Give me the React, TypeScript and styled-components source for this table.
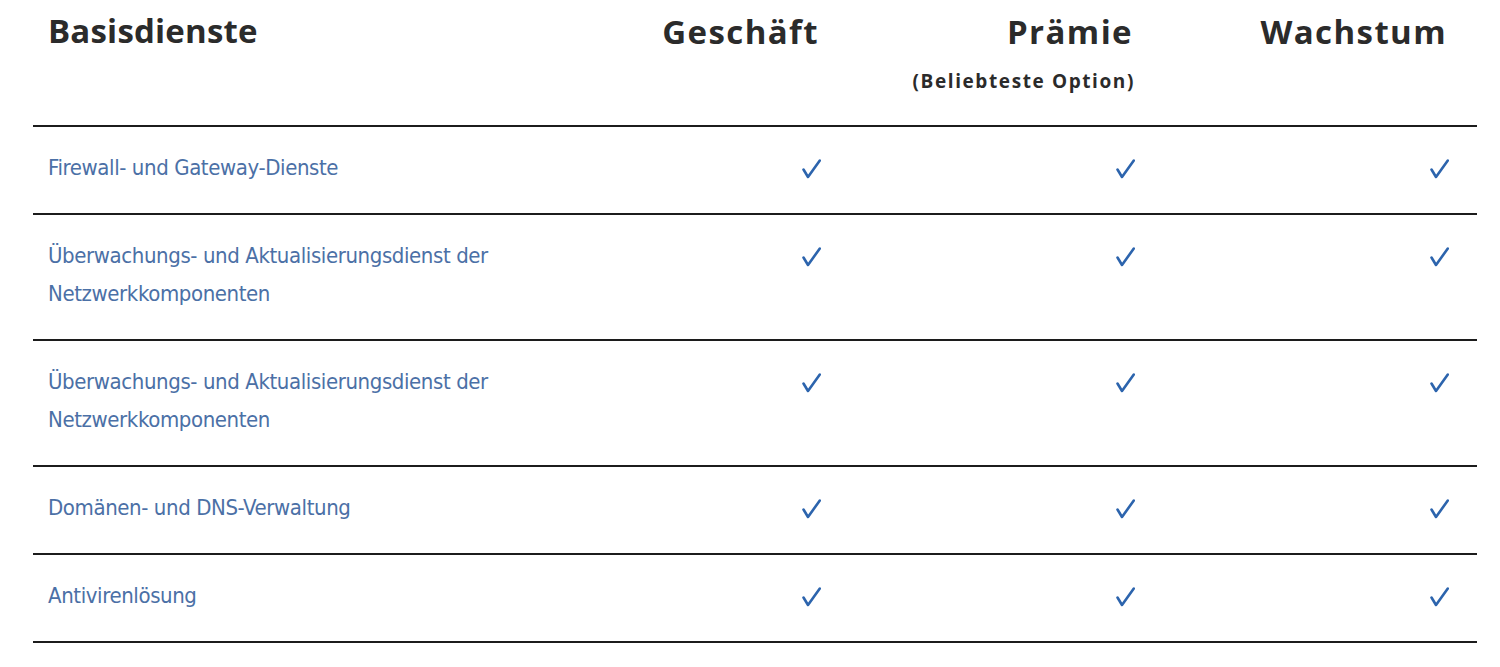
import React from "react";
import styled, { createGlobalStyle } from "styled-components";

const Global = createGlobalStyle`
  html, body { margin: 0; padding: 0; background: #fff; }
`;

const Page = styled.div`
  padding: 0 23px 0 33px;
`;

const Table = styled.table`
  width: 1444px;
  border-collapse: collapse;
  table-layout: fixed;
`;

const HeadCell = styled.th<{ $first?: boolean }>`
  text-align: ${(p) => (p.$first ? "left" : "right")};
  vertical-align: top;
  padding: ${(p) => (p.$first ? "9px 0 0 15px" : "10px 30px 0 0")};
  height: 126px;
  box-sizing: border-box;
  border-bottom: 2px solid #1c1c1c;
  font-family: "Open Sans", sans-serif;
  color: #2b2b2b;
`;

const HeadTitle = styled.div<{ $spaced?: boolean }>`
  font-size: 33px;
  font-weight: 700;
  line-height: 44px;
  letter-spacing: ${(p) => (p.$spaced ? "1.4px" : "0.2px")};
`;

const HeadNote = styled.div`
  font-size: 19px;
  font-weight: 700;
  letter-spacing: 1.6px;
  margin-top: 15px;
  line-height: 24px;
  margin-right: -2px;
`;

const Row = styled.tr`
  border-bottom: 2px solid #1c1c1c;
`;

const Label = styled.td`
  padding: 22px 0 26px 15px;
  vertical-align: top;
  font-family: "DejaVu Sans Condensed", "Liberation Sans Narrow", sans-serif;
  font-size: 22px;
  letter-spacing: -0.4px;
  line-height: 38px;
  color: #4b70a6;
`;

const Check = styled.td`
  padding: 22px 28px 26px 0;
  vertical-align: top;
  text-align: right;
  line-height: 38px;
`;

const CheckIcon = () => (
  <svg width="19" height="20" viewBox="0 0 19 20" style={{ verticalAlign: "middle" }}>
    <path
      d="M1.5 10.5 L6 18 L17.8 1.5"
      fill="none"
      stroke="#2c64ad"
      strokeWidth="2.6"
      strokeLinecap="round"
      strokeLinejoin="round"
    />
  </svg>
);

const rows = [
  ["Firewall- und Gateway-Dienste"],
  ["Überwachungs- und Aktualisierungsdienst der", "Netzwerkkomponenten"],
  ["Überwachungs- und Aktualisierungsdienst der", "Netzwerkkomponenten"],
  ["Domänen- und DNS-Verwaltung"],
  ["Antivirenlösung"],
];

export default function App() {
  return (
    <Page>
      <Global />
      <Table>
        <colgroup>
          <col style={{ width: 502 }} />
          <col style={{ width: 314 }} />
          <col style={{ width: 314 }} />
          <col style={{ width: 314 }} />
        </colgroup>
        <thead>
          <tr>
            <HeadCell $first>
              <HeadTitle>Basisdienste</HeadTitle>
            </HeadCell>
            <HeadCell>
              <HeadTitle $spaced>Geschäft</HeadTitle>
            </HeadCell>
            <HeadCell>
              <HeadTitle $spaced>Prämie</HeadTitle>
              <HeadNote>(Beliebteste Option)</HeadNote>
            </HeadCell>
            <HeadCell>
              <HeadTitle $spaced>Wachstum</HeadTitle>
            </HeadCell>
          </tr>
        </thead>
        <tbody>
          {rows.map((lines, i) => (
            <Row key={i}>
              <Label>
                {lines.map((l, j) => (
                  <div key={j}>{l}</div>
                ))}
              </Label>
              <Check><CheckIcon /></Check>
              <Check><CheckIcon /></Check>
              <Check><CheckIcon /></Check>
            </Row>
          ))}
        </tbody>
      </Table>
    </Page>
  );
}
